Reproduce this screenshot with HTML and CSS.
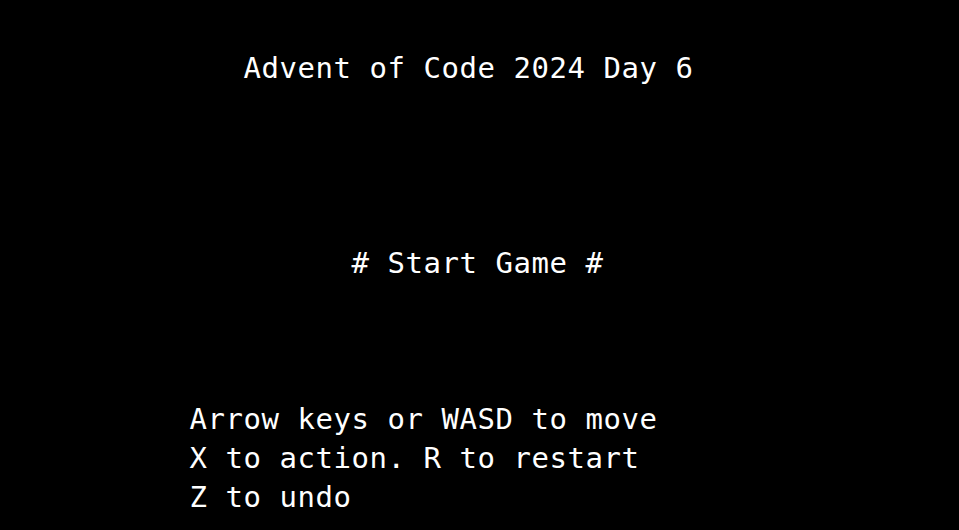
FILE: index.html
```html
<!DOCTYPE html>
<html>
<head>
<meta charset="utf-8">
<link rel="stylesheet" href="styles.css">
</head>
<body>
<main class="screen">
  <div class="row"></div>
  <div class="row">    Advent of Code 2024 Day 6</div>
  <div class="row"></div>
  <div class="row"></div>
  <div class="row"></div>
  <div class="row"></div>
  <div class="row">          # Start Game #</div>
  <div class="row"></div>
  <div class="row"></div>
  <div class="row"></div>
  <div class="row"> Arrow keys or WASD to move</div>
  <div class="row"> X to action. R to restart</div>
  <div class="row"> Z to undo</div>
</main>
</body>
</html>
```
FILE: styles.css
```css
html, body {
  margin: 0;
  padding: 0;
  background: #000;
  height: 530px;
  overflow: hidden;
}
.screen {
  width: 616px;
  margin: 0 auto;
  padding-top: 10px;
  display: flex;
  flex-direction: column;
  color: #fff;
  font-family: "DejaVu Sans Mono", "Liberation Mono", monospace;
  font-size: 29px;
  letter-spacing: 0.54px;
}
.row {
  height: 39px;
  line-height: 39px;
  white-space: pre;
}
```
